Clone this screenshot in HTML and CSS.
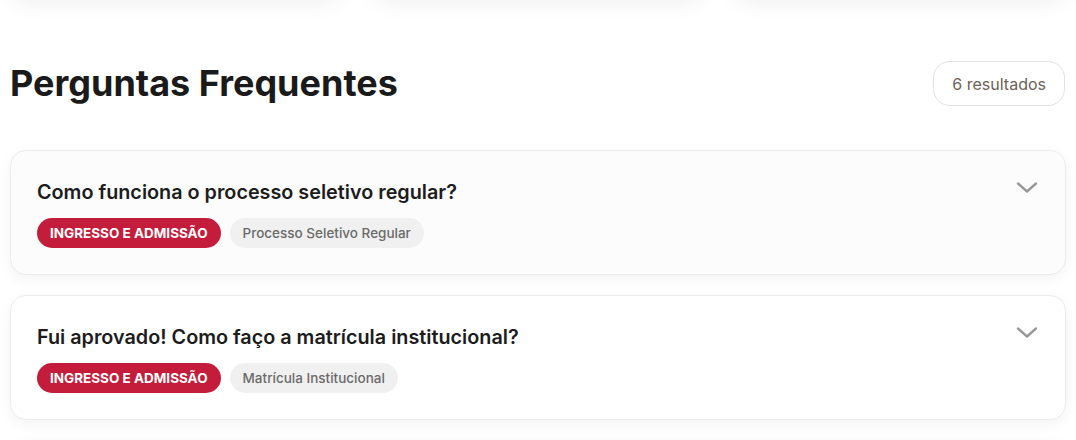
FILE: index.html
```html
<!DOCTYPE html>
<html lang="pt">
<head>
<meta charset="utf-8">
<link rel="stylesheet" href="styles.css">
</head>
<body>
<div class="page">
  <div class="top-cards">
    <div class="top-card"></div>
    <div class="top-card"></div>
    <div class="top-card"></div>
  </div>
  <div class="faq-header">
    <h2 class="faq-title">Perguntas Frequentes</h2>
    <span class="count-badge">6 resultados</span>
  </div>
  <div class="faq-list">
    <div class="faq-item faq-item--hover">
      <div class="faq-body">
        <h3 class="faq-question">Como funciona o processo seletivo regular?</h3>
        <div class="tags">
          <span class="tag tag--cat">INGRESSO E ADMISSÃO</span>
          <span class="tag tag--sub">Processo Seletivo Regular</span>
        </div>
      </div>
      <svg class="chevron" width="24" height="24" viewBox="0 0 24 24" fill="none" stroke="currentColor" stroke-width="2.4" stroke-linecap="round" stroke-linejoin="round"><path d="M3 8.5l9 8 9-8"/></svg>
    </div>
    <div class="faq-item">
      <div class="faq-body">
        <h3 class="faq-question">Fui aprovado! Como faço a matrícula institucional?</h3>
        <div class="tags">
          <span class="tag tag--cat">INGRESSO E ADMISSÃO</span>
          <span class="tag tag--sub">Matrícula Institucional</span>
        </div>
      </div>
      <svg class="chevron" width="24" height="24" viewBox="0 0 24 24" fill="none" stroke="currentColor" stroke-width="2.4" stroke-linecap="round" stroke-linejoin="round"><path d="M3 8.5l9 8 9-8"/></svg>
    </div>
    <div class="faq-item"></div>
  </div>
</div>
</body>
</html>
```
FILE: styles.css
```css
* { box-sizing: border-box; }
html, body { margin: 0; padding: 0; background: #fff; }
body { font-family: Inter, "Noto Sans", sans-serif; color: #1a1a1a; overflow: hidden; height: 440px; }
.page { padding: 0 10px; }
.top-cards {
  display: grid;
  grid-template-columns: repeat(3, 1fr);
  gap: 32px;
  margin-top: -120px;
}
.top-card {
  height: 112px;
  background: #fff;
  border-radius: 16px;
  box-shadow: 0 8px 24px rgba(0,0,0,0.08);
}
.faq-header {
  display: flex;
  align-items: center;
  justify-content: space-between;
  margin-top: 69px;
  height: 45px;
}
.faq-title {
  margin: 0;
  font-size: 36px;
  font-weight: 700;
  color: #1a1a1a;
  position: relative;
  top: -1px;
}
.count-badge {
  display: inline-flex;
  align-items: center;
  height: 45px;
  padding: 0 18px;
  border: 1px solid #e2e2e2;
  border-radius: 17px;
  font-size: 16px;
  color: #6b6258;
  margin-right: 1px;
}
.faq-list {
  margin-top: 44px;
  display: flex;
  flex-direction: column;
  gap: 20px;
}
.faq-item {
  display: flex;
  justify-content: space-between;
  align-items: flex-start;
  height: 125px;
  flex-shrink: 0;
  padding: 27px 27px 25px 26px;
  background: #fff;
  border: 1px solid #ececec;
  border-radius: 16px;
  box-shadow: 0 4px 14px rgba(0,0,0,0.05);
}
.faq-item--hover { background: #fcfcfc; }
.faq-question {
  margin: 0;
  font-size: 19.8px;
  font-weight: 600;
  line-height: 28px;
  color: #1c1c1c;
}
.tags {
  display: flex;
  gap: 9px;
  margin-top: 12px;
}
.tag {
  display: inline-flex;
  align-items: center;
  height: 30px;
  padding: 0 13px;
  border-radius: 15px;
  font-size: 13.5px;
}
.tag--cat {
  background: #c41d3c;
  color: #fff;
  font-weight: 700;
}
.tag--sub {
  background: #f0f0f0;
  color: #6a6a6a;
  font-weight: 500;
}
.chevron {
  color: #999;
  margin-top: -3px;
  margin-right: -1px;
  flex-shrink: 0;
}
```
